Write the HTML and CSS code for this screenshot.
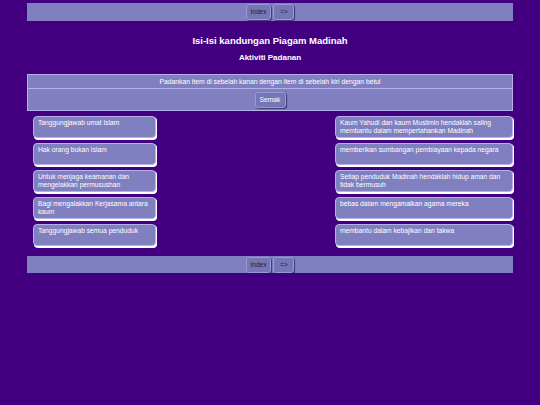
FILE: index.html
```html
<!DOCTYPE html>
<html>
<head>
<meta charset="utf-8">
<link rel="stylesheet" href="styles.css">
</head>
<body>
<div class="wrap">
  <div class="bar bar-top">
    <button class="btn">Index</button>
    <button class="btn">=&gt;</button>
  </div>
  <h1 class="title">Isi-Isi kandungan Piagam Madinah</h1>
  <h2 class="subtitle">Aktiviti Padanan</h2>
  <div class="panel">
    <div class="panel-row panel-text">Padankan item di sebelah kanan dengan item di sebelah kiri dengan betul</div>
    <div class="panel-row panel-action"><button class="btn btn-light">Semak</button></div>
  </div>
  <div class="match">
    <div class="col col-left">
      <div class="card">Tanggungjawab umat Islam</div>
      <div class="card">Hak orang bukan Islam</div>
      <div class="card">Untuk menjaga keamanan dan mengelakkan permusushan</div>
      <div class="card">Bagi mengalakkan Kerjasama antara kaum</div>
      <div class="card">Tanggungjawab semua penduduk</div>
    </div>
    <div class="col col-right">
      <div class="card">Kaum Yahudi dan kaum Muslimin hendaklah saling membantu dalam mempertahankan Madinah</div>
      <div class="card">memberikan sumbangan pembiayaan kepada negara</div>
      <div class="card">Setiap penduduk Madinah hendaklah hidup aman dan tidak bermusuh</div>
      <div class="card">bebas dalam mengamalkan agama mereka</div>
      <div class="card">membantu dalam kebajikan dan takwa</div>
    </div>
  </div>
  <div class="bar bar-bottom">
    <button class="btn">Index</button>
    <button class="btn">=&gt;</button>
  </div>
</div>
</body>
</html>
```
FILE: styles.css
```css
* { box-sizing: border-box; }
html, body {
  margin: 0;
  padding: 0;
  background: #420080;
  font-family: "Liberation Sans", Arial, sans-serif;
  color: #fff;
}
.wrap {
  width: 486px;
  margin: 0 auto;
  padding-top: 3px;
}
.bar {
  background: #8080c0;
  height: 18px;
  display: flex;
  justify-content: center;
  align-items: center;
  gap: 2px;
}
.bar-bottom {
  margin-top: 10px;
  height: 17px;
}
.btn {
  font-family: "Liberation Sans", Arial, sans-serif;
  font-size: 6.5px;
  color: #1a1a3a;
  background: #7676b6;
  border: 1px solid #9a9ad2;
  border-radius: 3px;
  height: 16px;
  min-width: 21px;
  padding: 0 4px;
  margin: 0;
  box-shadow: 1px 1px 1px #3a3a70;
  line-height: 14px;
}
.btn-light {
  color: #fff;
  font-size: 6.7px;
  width: 31px;
  padding: 0;
}
.title {
  margin: 14px 0 0;
  font-size: 9.5px;
  line-height: 12px;
  text-align: center;
  font-weight: bold;
}
.subtitle {
  margin: 6px 0 0;
  font-size: 8px;
  line-height: 10px;
  text-align: center;
  font-weight: bold;
}
.panel {
  margin-top: 11px;
  background: #8080c0;
  border: 1px solid #b8b0e8;
}
.panel-row {
  display: flex;
  justify-content: center;
  align-items: center;
}
.panel-text {
  height: 14px;
  font-size: 6.75px;
  border-bottom: 1px solid #b8b0e8;
}
.panel-action {
  height: 21px;
  padding-top: 1px;
}
.match {
  margin-top: 5px;
  padding-left: 6px;
  display: flex;
  justify-content: space-between;
}
.col {
  display: flex;
  flex-direction: column;
  gap: 5px;
}
.col-left { width: 123px; }
.col-right { width: 178px; }
.card {
  height: 22px;
  background: #8080c0;
  border: 1px solid #b8b0e8;
  border-radius: 4px;
  box-shadow: 1px 1px 0 #fff, 1px 2px 0 #fff;
  padding: 2px 4px;
  font-size: 6.7px;
  line-height: 7.6px;
  color: #fff;
}
```
